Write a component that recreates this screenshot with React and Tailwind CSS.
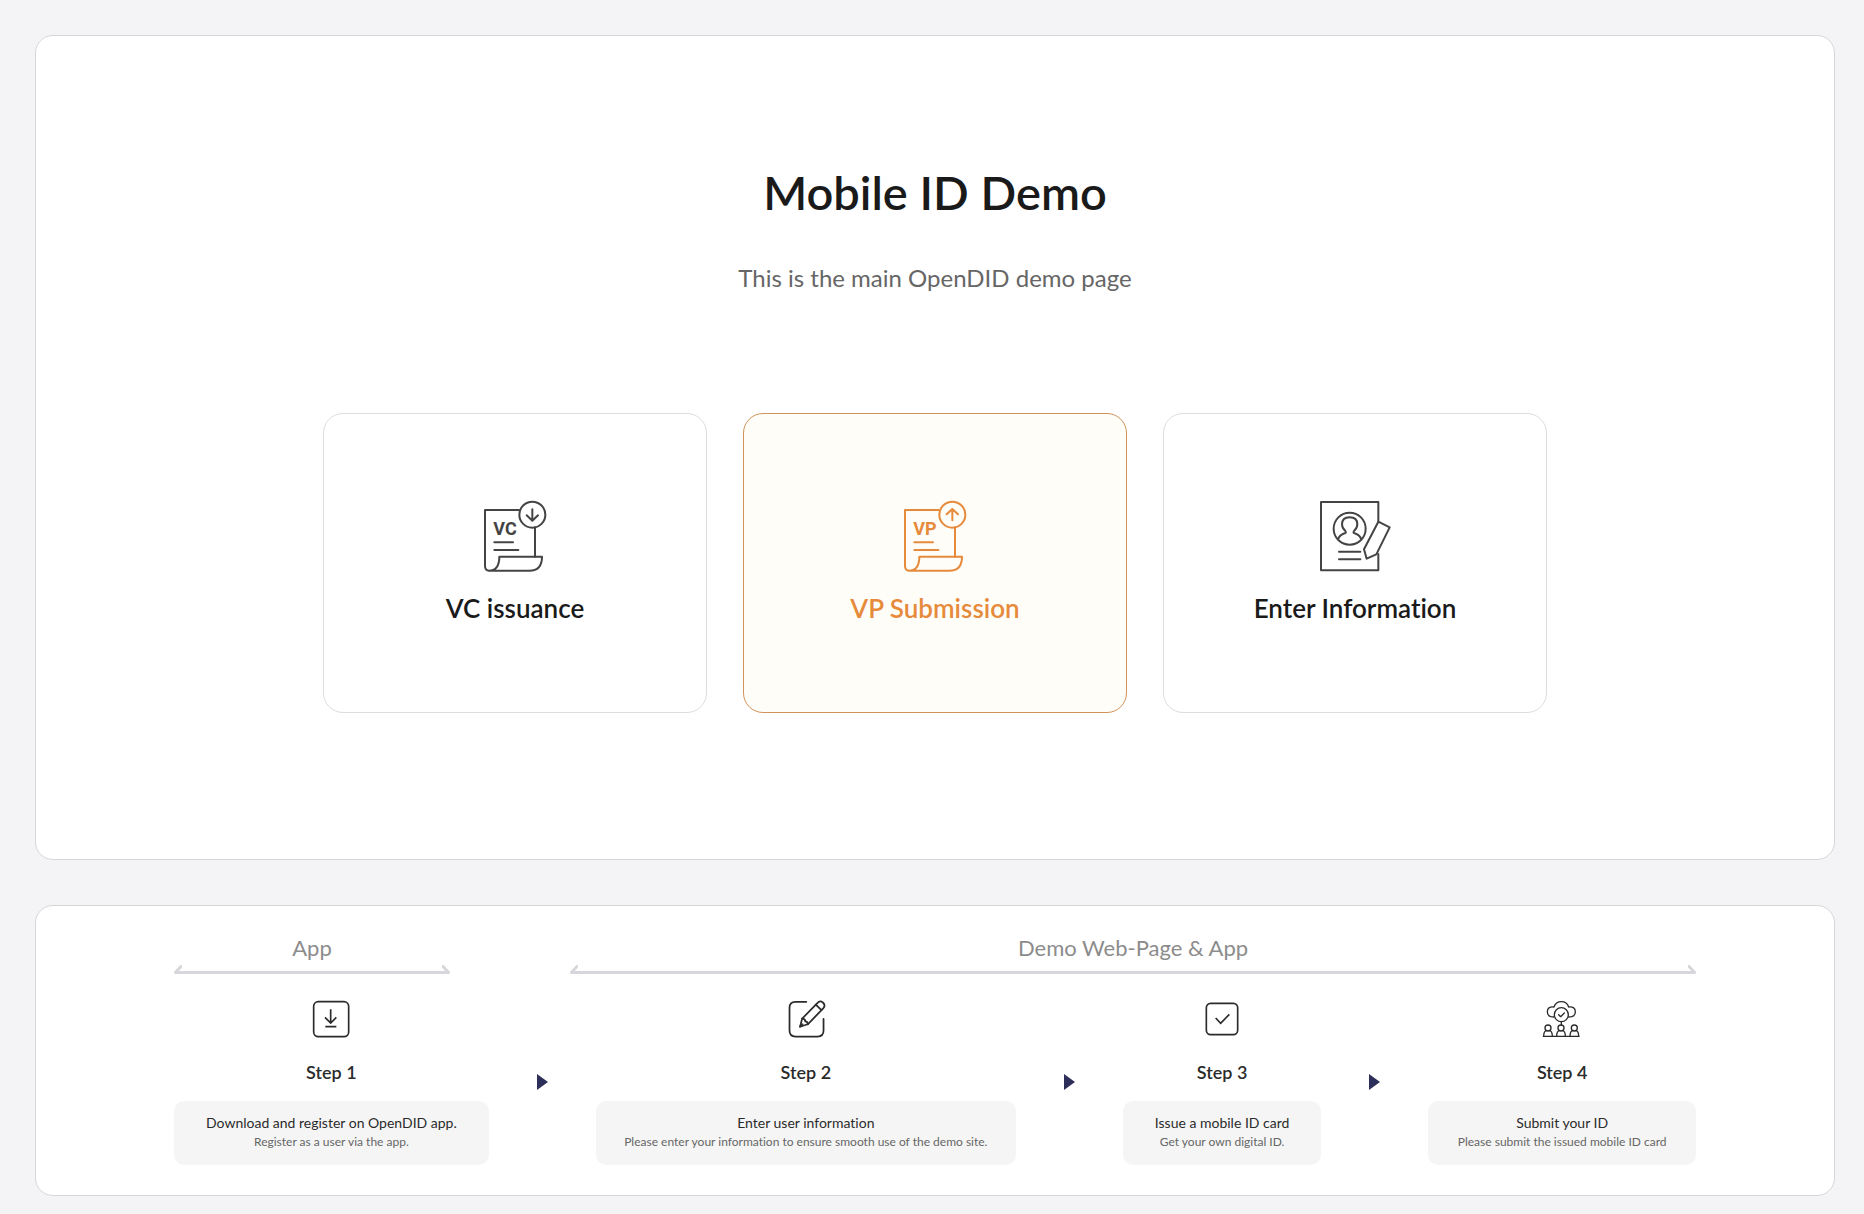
function CredentialIcon({ label, direction }) {
  return (
    <svg className="size-18" viewBox="147 60 216 216" fill="none" stroke="currentColor" strokeWidth="6" strokeLinecap="round" strokeLinejoin="round" aria-hidden="true">
      <path d="M267 90H165V258q0 14 13 14H298q38 0 38-42H208q0 42-32 42" />
      <path d="M315 142V230" />
      <circle cx="307" cy="104" r="39" />
      {direction === 'down' ? (
        <path d="M307 88V121M290 106L307 122L324 106" />
      ) : (
        <path d="M307 121V88M290 103L307 87L324 103" />
      )}
      <path d="M193 187H249M193 210H265" />
      <text x="190" y="164" fontSize="54" fontWeight="700" fontFamily="Roboto, sans-serif" fill="currentColor" stroke="none">
        {label}
      </text>
    </svg>
  );
}

function InformationIcon() {
  return (
    <svg className="size-18" viewBox="237 60 216 216" fill="none" stroke="currentColor" strokeWidth="6" strokeLinecap="round" strokeLinejoin="round" aria-hidden="true">
      <path d="M415 124V66H243V271H415V222" />
      <circle cx="329" cy="146" r="48" />
      <path d="M294 178q4-13 22-19q3-2 0-6q-10-8-10-20q0-21 23-21t23 21q0 12-10 20q-3 4 0 6q18 6 22 19" />
      <path d="M297 215H361M297 238H361" />
      <path d="M415 125L449 142L409 223L380 236L372 208Z" />
    </svg>
  );
}

function DownloadIcon() {
  return (
    <svg className="size-10" viewBox="454 238 120 120" fill="none" stroke="currentColor" strokeWidth="5" aria-hidden="true">
      <rect x="462" y="246" width="105" height="105" rx="14" />
      <path d="M513 269V309M496 293L513 310L530 293M497 321H530" />
    </svg>
  );
}

function EditIcon() {
  return (
    <svg className="size-10" viewBox="659 242 114 114" fill="none" stroke="currentColor" strokeWidth="5" strokeLinecap="round" strokeLinejoin="round" aria-hidden="true">
      <path d="M717 250H686Q669 250 669 267V332Q669 349 686 349H749Q766 349 766 332V299" />
      <path d="M699 321L705 298L749 253Q756 245 764 252Q773 260 765 269L721 314Z" />
      <path d="M744 258L760 274M705 298Q714 298 714 306Q721 306 721 314M699 321L706 314" />
    </svg>
  );
}

function CheckIcon() {
  return (
    <svg className="size-10" viewBox="457 238 120 120" fill="none" stroke="currentColor" strokeWidth="5" aria-hidden="true">
      <rect x="470" y="251" width="94" height="94" rx="13" />
      <path d="M498 295L513 311L539 284" />
    </svg>
  );
}

function Person({ x }) {
  return (
    <g>
      <circle cx={x} cy="325" r="9" />
      <path d={`M${x - 13} 350q0-16 9-18M${x + 13} 350q0-16-9-18`} />
    </g>
  );
}

function SubmitIcon() {
  return (
    <svg className="size-10" viewBox="547 238 120 120" fill="none" stroke="currentColor" strokeWidth="4" strokeLinecap="round" strokeLinejoin="round" aria-hidden="true">
      <path d="M583 292Q563 292 563 276Q563 260 583 262Q588 246 605 246T627 262Q647 260 647 276Q647 292 627 292" />
      <circle cx="605" cy="285" r="21" />
      <path d="M597 285L603 291L614 280M605 306V316M551 350H658" />
      <Person x={565} />
      <Person x={604} />
      <Person x={644} />
    </svg>
  );
}

const actions = [
  { title: 'VC issuance', icon: <CredentialIcon label="VC" direction="down" />, style: 'border-[#dddddd] bg-white text-[#444444]', titleStyle: 'text-[#1a1a1a]' },
  { title: 'VP Submission', icon: <CredentialIcon label="VP" direction="up" />, style: 'border-[#d0935a] bg-[#fffdf8] text-[#e68a3c]', titleStyle: 'text-[#e68a3c]' },
  { title: 'Enter Information', icon: <InformationIcon />, style: 'border-[#dddddd] bg-white text-[#444444]', titleStyle: 'text-[#1a1a1a]' },
];

const steps = [
  { name: 'Step 1', icon: <DownloadIcon />, title: 'Download and register on OpenDID app.', note: 'Register as a user via the app.' },
  { name: 'Step 2', icon: <EditIcon />, title: 'Enter user information', note: 'Please enter your information to ensure smooth use of the demo site.' },
  { name: 'Step 3', icon: <CheckIcon />, title: 'Issue a mobile ID card', note: 'Get your own digital ID.' },
  { name: 'Step 4', icon: <SubmitIcon />, title: 'Submit your ID', note: 'Please submit the issued mobile ID card' },
];

function Bracket({ label }) {
  return (
    <div>
      <p className="text-center text-[22px] leading-7 text-[#8c8c8c]">{label}</p>
      <div className="mt-[3px] flex items-end text-[#d6d6dc]" aria-hidden="true">
        <svg className="h-[9px] w-2" viewBox="0 0 8 9" fill="none" stroke="currentColor" strokeWidth="3" strokeLinecap="round" strokeLinejoin="round">
          <path d="M7 1.4L1.4 7.5H9" />
        </svg>
        <div className="h-[3px] flex-1 bg-current" />
        <svg className="h-[9px] w-2" viewBox="0 0 8 9" fill="none" stroke="currentColor" strokeWidth="3" strokeLinecap="round" strokeLinejoin="round">
          <path d="M1 1.4L6.6 7.5H-1" />
        </svg>
      </div>
    </div>
  );
}

function Step({ step }) {
  return (
    <li className="flex flex-col items-center text-center text-[#2b2b2b]">
      {step.icon}
      <h2 className="mt-[19px] text-lg leading-7 font-semibold">{step.name}</h2>
      <div className="mt-[15px] w-full rounded-[10px] bg-[#f5f5f5] pt-3 pb-[14px] whitespace-nowrap">
        <p className="text-sm leading-5">{step.title}</p>
        <p className="text-xs leading-[18px] text-[#666666]">{step.note}</p>
      </div>
    </li>
  );
}

function StepArrow() {
  return (
    <li aria-hidden="true">
      <svg className="h-4 w-[11px]" viewBox="0 0 11 16" fill="#2e2e5a">
        <path d="M0 0L11 8L0 16Z" />
      </svg>
    </li>
  );
}

export default function App() {
  return (
    <div className="flex min-h-screen flex-col gap-[45px] bg-[#f4f4f7] pt-[35px] pr-[29px] pb-[18px] pl-[35px] font-['Lato',sans-serif] [font-variant-ligatures:none]">
      <main className="rounded-[18px] border border-[#d6d6d8] bg-white pt-[126px] pb-[146px]">
        <h1 className="text-center text-[47px] leading-[60px] font-semibold text-[#1a1a1a]">Mobile ID Demo</h1>
        <p className="mt-10 text-center text-2xl leading-8 text-[#666666]">This is the main OpenDID demo page</p>
        <div className="mx-auto mt-[119px] grid max-w-[1224px] grid-cols-3 gap-9">
          {actions.map((action) => (
            <button key={action.title} type="button" className={`flex h-[300px] flex-col items-center justify-center gap-[18px] rounded-[20px] border ${action.style}`}>
              {action.icon}
              <span className={`text-[26px] leading-9 font-semibold ${action.titleStyle}`}>{action.title}</span>
            </button>
          ))}
        </div>
      </main>
      <section className="rounded-[18px] border border-[#d6d6d8] bg-white px-[138px] pt-7 pb-[30px]" aria-label="Demo steps">
        <div className="grid grid-cols-[276fr_1126fr] gap-[120px]">
          <Bracket label="App" />
          <Bracket label="Demo Web-Page &amp; App" />
        </div>
        <ol className="mt-[25px] grid grid-cols-[314fr_auto_419fr_auto_198fr_auto_267fr] items-center gap-x-12">
          {steps.flatMap((step, i) => [
            i > 0 ? <StepArrow key={`${step.name} arrow`} /> : null,
            <Step key={step.name} step={step} />,
          ])}
        </ol>
      </section>
    </div>
  );
}
